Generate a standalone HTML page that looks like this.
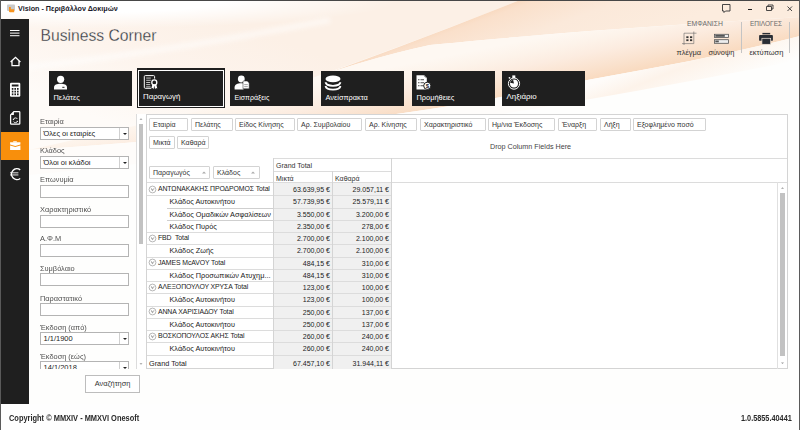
<!DOCTYPE html>
<html><head><meta charset="utf-8">
<style>
*{box-sizing:border-box;margin:0;padding:0}
html,body{width:800px;height:430px;overflow:hidden;background:#fefefe;font-family:"Liberation Sans",sans-serif;position:relative}
.a{position:absolute}
.t{position:absolute;white-space:nowrap;line-height:1}
#bg{position:absolute;left:0;top:0}
.tile{position:absolute;top:71px;width:83px;height:35px;background:#1f1f1f}
.tile .lbl{position:absolute;left:4.5px;top:22.6px;color:#fff;font-size:7.4px;white-space:nowrap;line-height:1}
.tile svg{position:absolute;left:0;top:0}
.lab{position:absolute;left:40.3px;font-size:6.4px;transform:scaleX(1.157);transform-origin:0 0;color:#505050;white-space:nowrap;line-height:1}
.box{position:absolute;left:40px;width:89px;height:13px;background:#fff;border:1px solid #b4b4b4}
.combo .v{position:absolute;left:2.5px;top:2.3px;font-size:7.5px;color:#222;white-space:nowrap;line-height:1}
.combo .dd{position:absolute;right:0;top:0;width:9px;height:11px;border-left:1px solid #d0d0d0}
.combo .dd:after{content:"";position:absolute;left:2.5px;top:4.5px;border-left:2px solid transparent;border-right:2px solid transparent;border-top:2px solid #222}
.fb{position:absolute;height:13px;border-radius:1px;background:#fff;border:1px solid #d3d3d3;font-size:7px;color:#333;line-height:11px;padding-left:3px;white-space:nowrap}
.hl{position:absolute;height:1px;background:#dcdcdc}
.vl{position:absolute;width:1px;background:#d4d4d4}
.rt{position:absolute;font-size:7.3px;color:#222;white-space:nowrap;line-height:1}
.num{text-align:right;font-size:7px}
.cell{position:absolute;height:12.25px;background:#f0f0f0}
.wc{position:absolute;top:0}
.up{letter-spacing:-0.1px;font-size:6.9px}

</style></head>
<body>
<svg id="bg" width="800" height="404" viewBox="0 0 800 404">
  <defs>
    <linearGradient id="pb" gradientUnits="userSpaceOnUse" x1="695" y1="57.75" x2="685" y2="8">
      <stop offset="0" stop-color="#f9dbc1"/>
      <stop offset="0.2" stop-color="#fae2ce"/>
      <stop offset="0.5" stop-color="#fcece0"/>
      <stop offset="0.75" stop-color="#fdf3ea"/>
      <stop offset="1" stop-color="#fef8f2"/>
    </linearGradient>
    <linearGradient id="r1" gradientUnits="userSpaceOnUse" x1="230" y1="20" x2="180" y2="150">
      <stop offset="0" stop-color="#fcf0e6"/>
      <stop offset="0.5" stop-color="#fdf4ed"/>
      <stop offset="1" stop-color="#fefbf8"/>
    </linearGradient>
    <linearGradient id="e1" gradientUnits="userSpaceOnUse" x1="400" y1="40.5" x2="427.8" y2="115.5">
      <stop offset="0" stop-color="#f8d6ba"/>
      <stop offset="0.12" stop-color="#fae0cb"/>
      <stop offset="0.5" stop-color="#fbe9da"/>
      <stop offset="1" stop-color="#fcecde"/>
    </linearGradient>
    <radialGradient id="wtl" gradientUnits="userSpaceOnUse" cx="80" cy="0" r="320" gradientTransform="scale(1 0.09)">
      <stop offset="0.45" stop-color="#fff" stop-opacity="1"/>
      <stop offset="1" stop-color="#fff" stop-opacity="0"/>
    </radialGradient>
    <linearGradient id="low" gradientUnits="userSpaceOnUse" x1="600" y1="80" x2="620" y2="130">
      <stop offset="0" stop-color="#fefcfa"/>
      <stop offset="0.35" stop-color="#fdf3ea"/>
      <stop offset="1" stop-color="#fefefd"/>
    </linearGradient>
    <filter id="bl" x="-10%" y="-50%" width="120%" height="200%"><feGaussianBlur stdDeviation="2.5"/></filter>
  </defs>
  <rect x="0" y="0" width="800" height="404" fill="#fefefd"/>
  <path d="M0 0 H520 Q 400 48 250 100 Q 150 130 29 150 L 0 152 Z" fill="url(#r1)"/>
  <path d="M520 0 H800 V17 Q 700 23 590 31 Q 480 40 430 45 Q 360 60 280 90 Q 400 48 520 0 Z" fill="url(#e1)"/>
  <path d="M800 17 Q 700 23 590 31 Q 480 40 430 45 Q 360 60 280 90 Q 250 100 29 150 L 29 150 Q 300 132 480 101 L 590 79.5 Q 640 70.5 690 61 Q 745 50 800 36 Z" fill="url(#pb)"/>
  <path d="M800 36 Q 745 50 690 61 Q 640 70.5 590 79.5 L 480 101 Q 300 132 29 150 L 29 175 Q 400 140 800 60 Z" fill="url(#low)"/>
  <path d="M0 70 Q 150 55 330 20" fill="none" stroke="#fff" stroke-width="5" opacity="0.6" filter="url(#bl)"/>
  <rect x="0" y="0" width="800" height="404" fill="url(#wtl)"/>
</svg>
<!-- window border -->
<div class="a" style="left:0;top:0;width:800px;height:1px;background:#474747"></div>
<div class="a" style="left:0;top:0;width:1px;height:430px;background:#5a5a5a"></div>
<div class="a" style="left:799px;top:0;width:1px;height:430px;background:#5a5a5a"></div>

<!-- title -->
<svg class="a" style="left:6px;top:3px" width="11" height="11" viewBox="0 0 11 11">
 <rect x="1" y="1.5" width="8" height="6.5" rx="1" fill="#c9c9c9"/>
 <path d="M3 4 h1.8 v2.3 h3.4 v2.9 h-4.2 q-1 0 -1 -1 z" fill="#f7931e"/>
</svg>
<div class="t" style="left:18px;top:5px;font-size:7.2px;font-weight:bold;color:#1a1a2a">Vision - Περιβάλλον Δοκιμών</div>

<!-- window controls -->
<svg class="a" style="left:720px;top:2px" width="80" height="14" viewBox="0 0 80 14">
 <path d="M2.5 2.5 h7.5 v6.5 h-4.5 l-1.5 1.5 v-1.5 h-1.5 z" fill="none" stroke="#333" stroke-width="0.9"/>
 <rect x="28" y="7" width="4" height="1" fill="#222"/>
 <path d="M46.5 4.5 h5 v4 h-5 z M48 4.5 v-1.5 h5 v4 h-1.5" fill="none" stroke="#333" stroke-width="0.9"/>
 <path d="M67.5 4.5 l4.5 4.5 M72 4.5 l-4.5 4.5" fill="none" stroke="#333" stroke-width="0.9"/>
</svg>

<!-- sidebar -->
<div class="a" style="left:1px;top:19px;width:28px;height:385px;background:#1f1f1f"></div>
<div class="a" style="left:1px;top:132px;width:28px;height:28px;background:#f88f0c"></div>
<svg class="a" style="left:0;top:19px" width="30" height="170" viewBox="0 19 30 170">
 <g fill="#fff">
  <rect x="10" y="30" width="9.5" height="1"/>
  <rect x="10" y="32.6" width="9.5" height="1"/>
  <rect x="10" y="35.2" width="9.5" height="1"/>
 </g>
 <path d="M10.6 62 L15.5 57.3 L20.4 62 M12 61 V65.7 H19 V61" fill="none" stroke="#fff" stroke-width="1.3"/>
 <rect x="10" y="82.7" width="10.3" height="14" rx="1.2" fill="#fff"/>
 <rect x="11.8" y="84.5" width="6.7" height="2" fill="#1f1f1f"/>
 <g fill="#1f1f1f">
  <rect x="11.8" y="88" width="1.6" height="1.8"/><rect x="14.4" y="88" width="1.6" height="1.8"/><rect x="17" y="88" width="1.6" height="1.8"/>
  <rect x="11.8" y="90.7" width="1.6" height="1.8"/><rect x="14.4" y="90.7" width="1.6" height="1.8"/><rect x="17" y="90.7" width="1.6" height="1.8"/>
  <rect x="11.8" y="93.4" width="1.6" height="1.8"/><rect x="14.4" y="93.4" width="1.6" height="1.8"/><rect x="17" y="93.4" width="1.6" height="1.8"/>
 </g>
 <path d="M13.9 111.6 H19.1 Q19.8 111.6 19.8 112.3 V123.5 Q19.8 124.2 19.1 124.2 H11.3 Q10.6 124.2 10.6 123.5 V114.9 Z" fill="none" stroke="#fff" stroke-width="1.25"/>
 <path d="M10.6 114.9 L13.9 111.6 V114.9 Z" fill="#fff"/>
 <path d="M13.3 119.6 Q13.8 117.9 15.5 117.9 Q16.9 117.9 17.4 119" fill="none" stroke="#fff" stroke-width="0.9"/>
 <path d="M17.6 121.2 Q17.1 122.6 15.4 122.6 Q14 122.6 13.5 121.6" fill="none" stroke="#fff" stroke-width="0.9"/>
 <path d="M12.6 119.2 L14 120.3 L14.2 118.7 Z M18.3 121.6 L16.9 120.5 L16.7 122.1 Z" fill="#fff"/>
 <rect x="13.2" y="141" width="3.6" height="1.5" fill="#fff" opacity="0.75"/>
 <path d="M10.1 142.3 H20.4 V144.4 L15.3 145.9 L10.1 144.4 Z" fill="#fff"/>
 <path d="M10.1 145.4 L15.3 147 L20.4 145.4 V150 H10.1 Z" fill="#fff"/>
 <path d="M20.2 169.9 A5.4 5.4 0 1 0 20.2 178.5" fill="none" stroke="#fff" stroke-width="1.4"/>
 <rect x="10" y="172.4" width="8.4" height="0.9" fill="#fff"/>
 <rect x="10" y="174.5" width="8.4" height="0.9" fill="#fff"/>
</svg>

<!-- header title -->
<div class="t" style="left:40.5px;top:28px;font-size:15.7px;color:#2c3039;-webkit-text-stroke:0.3px #fcf4ec">Business Corner</div>

<!-- ribbon -->
<div class="t" style="left:687px;top:21px;font-size:6.8px;color:#6a6a6a">ΕΜΦΑΝΙΣΗ</div>
<div class="t" style="left:750px;top:21.3px;font-size:6.5px;color:#6a6a6a">ΕΠΙΛΟΓΕΣ</div>
<div class="a" style="left:741px;top:22px;width:1px;height:31px;background:#c4c4c4"></div>
<div class="a" style="left:789px;top:22px;width:1px;height:31px;background:#c4c4c4"></div>
<svg class="a" style="left:676px;top:26px" width="124" height="24" viewBox="676 26 124 24">
 <path d="M684 33.2 H696.5 M684 33.2 V45 M693.8 31.5 V43.6 H682" fill="none" stroke="#666" stroke-width="0.6"/>
 <g fill="#333"><rect x="686.3" y="36.3" width="2.2" height="1.8"/><rect x="690" y="36.3" width="2.2" height="1.8"/><rect x="686.3" y="39.3" width="2.2" height="1.8"/><rect x="690" y="39.3" width="2.2" height="1.8"/></g>
 <rect x="714.6" y="34.3" width="14" height="3.2" fill="#eee" stroke="#555" stroke-width="0.8"/>
 <rect x="715.3" y="35" width="9.5" height="1.8" fill="#555"/>
 <rect x="714.6" y="39.7" width="14" height="3.6" fill="#eee" stroke="#555" stroke-width="0.8"/>
 <rect x="715.3" y="40.5" width="3.5" height="1.8" fill="#555"/>
 <rect x="762.4" y="32.9" width="7.8" height="1.5" fill="#2a2e35"/>
 <rect x="759.1" y="35" width="13.8" height="5.8" rx="0.9" fill="#2a2e35"/>
 <rect x="761.9" y="38.3" width="8.8" height="6" fill="#2a2e35" stroke="#f3e6da" stroke-width="0.7"/>
</svg>
<div class="t" style="left:676.5px;top:48.5px;font-size:7.5px;color:#333">πλέγμα</div>
<div class="t" style="left:708.5px;top:48.5px;font-size:7.4px;color:#333">σύνοψη</div>
<div class="t" style="left:749.5px;top:48.5px;font-size:7.5px;color:#333">εκτύπωση</div>

<!-- tiles -->
<div class="tile" style="left:49px"><svg width="83" height="35" viewBox="49 71 83 35">
 <circle cx="60.6" cy="79.3" r="3.6" fill="#fff"/>
 <path d="M54 89.6 V87.5 C54 84.8 57 83.8 60.5 83.8 C64 83.8 67 84.8 67 87.5 V89.6 Z" fill="#fff"/>
 <rect x="62.3" y="86.8" width="2.2" height="1" fill="#1f1f1f"/>
</svg><div class="lbl">Πελάτες</div></div>

<div class="a" style="left:137px;top:68px;width:88px;height:40px;border:1px solid #1f1f1f;border-top-width:2px"></div>
<div class="tile" style="left:138px;top:70px;width:86px;height:37px;border:1px solid #fff"><svg width="84" height="35" viewBox="139 71 84 35">
 <path d="M151 88.3 H145.3 Q144.3 88.3 144.3 87.3 V76.6 Q144.3 75.6 145.3 75.6 H153.6 Q154.6 75.6 154.6 76.6 V78.6" fill="none" stroke="#fff" stroke-width="1"/>
 <g fill="#d8d8d8"><rect x="146.2" y="77.6" width="4.6" height="0.9"/><rect x="146.2" y="79.8" width="4.6" height="0.9"/><rect x="146.2" y="82" width="4" height="0.9"/><rect x="146.2" y="84.2" width="4" height="0.9"/><rect x="146.2" y="86.4" width="4.3" height="0.9"/></g>
 <circle cx="154.3" cy="82.4" r="2.5" fill="#1f1f1f" stroke="#fff" stroke-width="1.3"/>
 <path d="M152.3 84.6 L151.3 88.6 L152.7 88 L153.5 89.2 L154.3 85.6 L155.1 89.2 L155.9 88 L157.3 88.6 L156.3 84.6 Z" fill="#fff"/>
</svg><div class="lbl" style="left:4px;top:21.7px;font-size:7.8px">Παραγωγή</div></div>

<div class="tile" style="left:230px"><svg width="83" height="35" viewBox="230 71 83 35">
 <circle cx="241.3" cy="79" r="3.4" fill="#fff"/>
 <path d="M234.6 89.4 V87.3 C234.6 84.5 237.5 83.3 241 83.3 C242 83.3 243 83.4 243.6 83.6 V89.4 Z" fill="#fff"/>
 <path d="M243 81 H247.3 L249.2 82.9 V88.8 H243 Z" fill="#fff" stroke="#1f1f1f" stroke-width="0.5"/>
 <g fill="#888"><rect x="244.2" y="84.3" width="3.6" height="0.8"/><rect x="244.2" y="86.3" width="3.6" height="0.8"/></g>
</svg><div class="lbl" style="font-size:7.05px;top:22.9px">Εισπράξεις</div></div>

<div class="tile" style="left:321px"><svg width="83" height="35" viewBox="321 71 83 35">
 <ellipse cx="333" cy="78.9" rx="7.5" ry="3.3" fill="#fff"/>
 <path d="M325.5 82.3 C326 84.6 329.5 85.8 333 85.8 C336.5 85.8 340 84.6 340.5 82.3" fill="none" stroke="#fff" stroke-width="1.8"/>
 <path d="M325.5 86 C326 88.3 329.5 89.6 333 89.6 C336.5 89.6 340 88.3 340.5 86" fill="none" stroke="#fff" stroke-width="1.8"/>
</svg><div class="lbl">Ανείσπρακτα</div></div>

<div class="tile" style="left:412px"><svg width="83" height="35" viewBox="412 71 83 35">
 <path d="M416.5 75.2 H424.2 L426.8 77.8 V89.5 H416.5 Z" fill="#fff"/><path d="M424.2 75.8 L426.2 77.8" stroke="#1f1f1f" stroke-width="0.6"/>
 <g fill="#777"><rect x="418" y="79" width="1.5" height="1.3"/><rect x="420.5" y="79" width="3.5" height="1.3"/><rect x="418" y="82" width="1.5" height="1.3"/><rect x="420.5" y="82" width="3.5" height="1.3"/><rect x="418" y="85" width="1.5" height="1.3"/><rect x="420.5" y="85" width="3.5" height="1.3"/></g>
 <circle cx="427.3" cy="85.8" r="3.6" fill="#fff" stroke="#1f1f1f" stroke-width="1"/>
 <text x="427.3" y="88.1" font-family="Liberation Sans" font-weight="bold" font-size="6" text-anchor="middle" fill="#1f1f1f">$</text>
</svg><div class="lbl">Προμήθειες</div></div>

<div class="tile" style="left:502px"><svg width="83" height="35" viewBox="502 71 83 35">
 <rect x="512.3" y="75.4" width="3" height="2.6" fill="#fff"/>
 <circle cx="514" cy="83.6" r="5.6" fill="none" stroke="#fff" stroke-width="1"/>
 <circle cx="514" cy="83.6" r="4" fill="#fff"/>
 <path d="M514 83.6 L510.1 82.7 A4 4 0 0 1 513.1 79.7 Z" fill="#1f1f1f"/>
 <circle cx="509.5" cy="77.8" r="0.9" fill="#fff"/>
</svg><div class="lbl" style="font-size:7.9px;top:22.2px">Ληξιάριο</div></div>

<!-- filter panel -->
<div class="lab" style="top:119.1px">Εταιρία</div>
<div class="box combo" style="top:127px"><div class="v">Όλες οι εταιρίες</div><div class="dd"></div></div>
<div class="lab" style="top:148.1px">Κλάδος</div>
<div class="box combo" style="top:156px"><div class="v">Όλοι οι κλάδοι</div><div class="dd"></div></div>
<div class="lab" style="top:177.1px">Επωνυμία</div>
<div class="box" style="top:185px"></div>
<div class="lab" style="top:207.1px">Χαρακτηριστικό</div>
<div class="box" style="top:215px"></div>
<div class="lab" style="top:236.1px">Α.Φ.Μ</div>
<div class="box" style="top:244px"></div>
<div class="lab" style="top:266.1px">Συμβόλαιο</div>
<div class="box" style="top:273px"></div>
<div class="lab" style="top:296.1px">Παραστατικό</div>
<div class="box" style="top:303px"></div>
<div class="lab" style="top:325.1px">Έκδοση (από)</div>
<div class="box combo" style="top:332px"><div class="v">1/1/1900</div><div class="dd"></div></div>
<div class="lab" style="top:354px">Έκδοση (εώς)</div>
<div class="a" style="left:0;top:361px;width:140px;height:8px;overflow:hidden">
 <div class="box combo" style="top:0"><div class="v">14/1/2018</div><div class="dd"></div></div>
</div>
<!-- left scrollbar -->
<div class="a" style="left:136px;top:114px;width:10px;height:255px;background:#fff;border-left:1px solid #dcdcdc"></div>
<div class="a" style="left:139px;top:124px;width:4px;height:120px;background:#c2c2c2"></div>
<svg class="a" style="left:136px;top:114px" width="10" height="255" viewBox="136 114 10 255"><path d="M139.5 119.8 L141 118.2 L142.5 119.8 Z" fill="#999"/><path d="M139.5 363.2 L141 364.8 L142.5 363.2 Z" fill="#999"/></svg>

<div class="a" style="left:85px;top:375px;width:55px;height:18px;background:#fff;border:1px solid #bdbdbd;font-size:7.4px;color:#333;text-align:center;line-height:16px">Αναζήτηση</div>

<!-- pivot -->
<div class="a" style="left:146px;top:114px;width:642px;height:255px;background:#fff;border:1px solid #d4d4d4"></div>
<div class="fb" style="left:149px;top:118px;width:39px">Εταιρία</div>
<div class="fb" style="left:191px;top:118px;width:42px">Πελάτης</div>
<div class="fb" style="left:235px;top:118px;width:60px">Είδος Κίνησης</div>
<div class="fb" style="left:297px;top:118px;width:65px">Αρ. Συμβολαίου</div>
<div class="fb" style="left:365px;top:118px;width:52px">Αρ. Κίνησης</div>
<div class="fb" style="left:420px;top:118px;width:66px">Χαρακτηριστικό</div>
<div class="fb" style="left:488px;top:118px;width:67px">Ημ/νια Έκδοσης</div>
<div class="fb" style="left:558px;top:118px;width:39px">Έναρξη</div>
<div class="fb" style="left:600px;top:118px;width:31px">Λήξη</div>
<div class="fb" style="left:633px;top:118px;width:73px">Εξοφλημένο ποσό</div>
<div class="fb" style="left:149px;top:136px;width:26px">Μικτά</div>
<div class="fb" style="left:177px;top:136px;width:32px">Καθαρά</div>
<div class="t" style="left:490px;top:143.3px;font-size:7.2px;color:#444">Drop Column Fields Here</div>
<div class="hl" style="left:273px;top:158px;width:514px"></div>
<div class="fb" style="left:149px;top:166px;width:61px">Παραγωγός</div>
<div class="fb" style="left:213px;top:166px;width:47px">Κλάδος</div>
<svg class="a" style="left:201px;top:170px" width="6" height="5"><path d="M1 3.5 L3 1.5 L5 3.5 Z" fill="#aaa"/></svg>
<svg class="a" style="left:250px;top:170px" width="6" height="5"><path d="M1 3.5 L3 1.5 L5 3.5 Z" fill="#aaa"/></svg>
<div class="hl" style="left:274px;top:171px;width:117px"></div>
<div class="hl" style="left:147px;top:182px;width:640px"></div>
<div class="t" style="left:276px;top:162px;font-size:7px;color:#333">Grand Total</div>
<div class="t" style="left:276px;top:174.5px;font-size:7px;color:#333">Μικτά</div>
<div class="t" style="left:335px;top:174.5px;font-size:7px;color:#333">Καθαρά</div>
<div class="cell" style="left:274px;top:183.00px;width:58px"></div>
<div class="cell" style="left:333px;top:183.00px;width:58px"></div>
<div class="cell" style="left:274px;top:195.25px;width:58px"></div>
<div class="cell" style="left:333px;top:195.25px;width:58px"></div>
<div class="cell" style="left:274px;top:207.50px;width:58px"></div>
<div class="cell" style="left:333px;top:207.50px;width:58px"></div>
<div class="cell" style="left:274px;top:219.75px;width:58px"></div>
<div class="cell" style="left:333px;top:219.75px;width:58px"></div>
<div class="cell" style="left:274px;top:232.00px;width:58px"></div>
<div class="cell" style="left:333px;top:232.00px;width:58px"></div>
<div class="cell" style="left:274px;top:244.25px;width:58px"></div>
<div class="cell" style="left:333px;top:244.25px;width:58px"></div>
<div class="cell" style="left:274px;top:256.50px;width:58px"></div>
<div class="cell" style="left:333px;top:256.50px;width:58px"></div>
<div class="cell" style="left:274px;top:268.75px;width:58px"></div>
<div class="cell" style="left:333px;top:268.75px;width:58px"></div>
<div class="cell" style="left:274px;top:281.00px;width:58px"></div>
<div class="cell" style="left:333px;top:281.00px;width:58px"></div>
<div class="cell" style="left:274px;top:293.25px;width:58px"></div>
<div class="cell" style="left:333px;top:293.25px;width:58px"></div>
<div class="cell" style="left:274px;top:305.50px;width:58px"></div>
<div class="cell" style="left:333px;top:305.50px;width:58px"></div>
<div class="cell" style="left:274px;top:317.75px;width:58px"></div>
<div class="cell" style="left:333px;top:317.75px;width:58px"></div>
<div class="cell" style="left:274px;top:330.00px;width:58px"></div>
<div class="cell" style="left:333px;top:330.00px;width:58px"></div>
<div class="cell" style="left:274px;top:342.25px;width:58px"></div>
<div class="cell" style="left:333px;top:342.25px;width:58px"></div>
<div class="cell" style="left:274px;top:354.50px;width:58px;height:14px"></div>
<div class="cell" style="left:333px;top:354.50px;width:58px;height:14px"></div>
<svg class="a" style="left:147.5px;top:184.50px" width="9" height="9" viewBox="0 0 9 9"><circle cx="4.5" cy="4.5" r="3.4" fill="none" stroke="#999" stroke-width="0.7"/><path d="M2.9 3.3 L4.5 4.9 L6.1 3.3 M3.4 4.6 L4.5 5.7 L5.6 4.6" fill="none" stroke="#777" stroke-width="0.7"/></svg>
<div class="rt up" style="left:158px;top:186.00px">ΑΝΤΩΝΑΚΑΚΗΣ ΠΡΟΔΡΟΜΟΣ Total</div>
<div class="rt num" style="left:274px;top:186.00px;width:56px">63.639,95 €</div>
<div class="rt num" style="left:333px;top:186.00px;width:56px">29.057,11 €</div>
<div class="rt" style="left:169.5px;top:198.25px">Κλάδος Αυτοκινήτου</div>
<div class="rt num" style="left:274px;top:198.25px;width:56px">57.739,95 €</div>
<div class="rt num" style="left:333px;top:198.25px;width:56px">25.579,11 €</div>
<div class="rt" style="left:169.5px;top:210.50px">Κλάδος Ομαδικών Ασφαλίσεων</div>
<div class="rt num" style="left:274px;top:210.50px;width:56px">3.550,00 €</div>
<div class="rt num" style="left:333px;top:210.50px;width:56px">3.200,00 €</div>
<div class="rt" style="left:169.5px;top:222.75px">Κλάδος Πυρός</div>
<div class="rt num" style="left:274px;top:222.75px;width:56px">2.350,00 €</div>
<div class="rt num" style="left:333px;top:222.75px;width:56px">278,00 €</div>
<svg class="a" style="left:147.5px;top:233.50px" width="9" height="9" viewBox="0 0 9 9"><circle cx="4.5" cy="4.5" r="3.4" fill="none" stroke="#999" stroke-width="0.7"/><path d="M2.9 3.3 L4.5 4.9 L6.1 3.3 M3.4 4.6 L4.5 5.7 L5.6 4.6" fill="none" stroke="#777" stroke-width="0.7"/></svg>
<div class="rt up" style="left:158px;top:235.00px">FBD&nbsp; Total</div>
<div class="rt num" style="left:274px;top:235.00px;width:56px">2.700,00 €</div>
<div class="rt num" style="left:333px;top:235.00px;width:56px">2.100,00 €</div>
<div class="rt" style="left:169.5px;top:247.25px">Κλάδος Ζωής</div>
<div class="rt num" style="left:274px;top:247.25px;width:56px">2.700,00 €</div>
<div class="rt num" style="left:333px;top:247.25px;width:56px">2.100,00 €</div>
<svg class="a" style="left:147.5px;top:258.00px" width="9" height="9" viewBox="0 0 9 9"><circle cx="4.5" cy="4.5" r="3.4" fill="none" stroke="#999" stroke-width="0.7"/><path d="M2.9 3.3 L4.5 4.9 L6.1 3.3 M3.4 4.6 L4.5 5.7 L5.6 4.6" fill="none" stroke="#777" stroke-width="0.7"/></svg>
<div class="rt up" style="left:158px;top:259.50px">JAMES McAVOY Total</div>
<div class="rt num" style="left:274px;top:259.50px;width:56px">484,15 €</div>
<div class="rt num" style="left:333px;top:259.50px;width:56px">310,00 €</div>
<div class="rt" style="left:169.5px;top:271.75px">Κλάδος Προσωπικών Ατυχημ...</div>
<div class="rt num" style="left:274px;top:271.75px;width:56px">484,15 €</div>
<div class="rt num" style="left:333px;top:271.75px;width:56px">310,00 €</div>
<svg class="a" style="left:147.5px;top:282.50px" width="9" height="9" viewBox="0 0 9 9"><circle cx="4.5" cy="4.5" r="3.4" fill="none" stroke="#999" stroke-width="0.7"/><path d="M2.9 3.3 L4.5 4.9 L6.1 3.3 M3.4 4.6 L4.5 5.7 L5.6 4.6" fill="none" stroke="#777" stroke-width="0.7"/></svg>
<div class="rt up" style="left:158px;top:284.00px">ΑΛΕΞΟΠΟΥΛΟΥ ΧΡΥΣΑ Total</div>
<div class="rt num" style="left:274px;top:284.00px;width:56px">123,00 €</div>
<div class="rt num" style="left:333px;top:284.00px;width:56px">100,00 €</div>
<div class="rt" style="left:169.5px;top:296.25px">Κλάδος Αυτοκινήτου</div>
<div class="rt num" style="left:274px;top:296.25px;width:56px">123,00 €</div>
<div class="rt num" style="left:333px;top:296.25px;width:56px">100,00 €</div>
<svg class="a" style="left:147.5px;top:307.00px" width="9" height="9" viewBox="0 0 9 9"><circle cx="4.5" cy="4.5" r="3.4" fill="none" stroke="#999" stroke-width="0.7"/><path d="M2.9 3.3 L4.5 4.9 L6.1 3.3 M3.4 4.6 L4.5 5.7 L5.6 4.6" fill="none" stroke="#777" stroke-width="0.7"/></svg>
<div class="rt up" style="left:158px;top:308.50px">ΑΝΝΑ ΧΑΡΙΣΙΑΔΟΥ Total</div>
<div class="rt num" style="left:274px;top:308.50px;width:56px">250,00 €</div>
<div class="rt num" style="left:333px;top:308.50px;width:56px">137,00 €</div>
<div class="rt" style="left:169.5px;top:320.75px">Κλάδος Αυτοκινήτου</div>
<div class="rt num" style="left:274px;top:320.75px;width:56px">250,00 €</div>
<div class="rt num" style="left:333px;top:320.75px;width:56px">137,00 €</div>
<svg class="a" style="left:147.5px;top:331.50px" width="9" height="9" viewBox="0 0 9 9"><circle cx="4.5" cy="4.5" r="3.4" fill="none" stroke="#999" stroke-width="0.7"/><path d="M2.9 3.3 L4.5 4.9 L6.1 3.3 M3.4 4.6 L4.5 5.7 L5.6 4.6" fill="none" stroke="#777" stroke-width="0.7"/></svg>
<div class="rt up" style="left:158px;top:333.00px">ΒΟΣΚΟΠΟΥΛΟΣ ΑΚΗΣ Total</div>
<div class="rt num" style="left:274px;top:333.00px;width:56px">260,00 €</div>
<div class="rt num" style="left:333px;top:333.00px;width:56px">240,00 €</div>
<div class="rt" style="left:169.5px;top:345.25px">Κλάδος Αυτοκινήτου</div>
<div class="rt num" style="left:274px;top:345.25px;width:56px">260,00 €</div>
<div class="rt num" style="left:333px;top:345.25px;width:56px">240,00 €</div>
<div class="rt" style="left:149px;top:359.80px">Grand Total</div>
<div class="rt num" style="left:274px;top:359.80px;width:56px">67.457,10 €</div>
<div class="rt num" style="left:333px;top:359.80px;width:56px">31.944,11 €</div>
<div class="hl" style="left:147px;top:195.25px;width:126px"></div>
<div class="hl" style="left:274px;top:195.25px;width:117px"></div>
<div class="hl" style="left:167px;top:207.50px;width:106px;background:#cfcfcf"></div>
<div class="hl" style="left:274px;top:207.50px;width:117px"></div>
<div class="hl" style="left:167px;top:219.75px;width:106px;background:#cfcfcf"></div>
<div class="hl" style="left:274px;top:219.75px;width:117px"></div>
<div class="hl" style="left:147px;top:232.00px;width:126px"></div>
<div class="hl" style="left:274px;top:232.00px;width:117px"></div>
<div class="hl" style="left:147px;top:244.25px;width:126px"></div>
<div class="hl" style="left:274px;top:244.25px;width:117px"></div>
<div class="hl" style="left:147px;top:256.50px;width:126px"></div>
<div class="hl" style="left:274px;top:256.50px;width:117px"></div>
<div class="hl" style="left:147px;top:268.75px;width:126px"></div>
<div class="hl" style="left:274px;top:268.75px;width:117px"></div>
<div class="hl" style="left:147px;top:281.00px;width:126px"></div>
<div class="hl" style="left:274px;top:281.00px;width:117px"></div>
<div class="hl" style="left:147px;top:293.25px;width:126px"></div>
<div class="hl" style="left:274px;top:293.25px;width:117px"></div>
<div class="hl" style="left:147px;top:305.50px;width:126px"></div>
<div class="hl" style="left:274px;top:305.50px;width:117px"></div>
<div class="hl" style="left:147px;top:317.75px;width:126px"></div>
<div class="hl" style="left:274px;top:317.75px;width:117px"></div>
<div class="hl" style="left:147px;top:330.00px;width:126px"></div>
<div class="hl" style="left:274px;top:330.00px;width:117px"></div>
<div class="hl" style="left:147px;top:342.25px;width:126px"></div>
<div class="hl" style="left:274px;top:342.25px;width:117px"></div>
<div class="hl" style="left:147px;top:354.50px;width:126px"></div>
<div class="hl" style="left:274px;top:354.50px;width:117px"></div>
<div class="vl" style="left:273px;top:158px;height:211px"></div>
<div class="vl" style="left:332px;top:171px;height:198px"></div>
<div class="vl" style="left:391px;top:158px;height:211px"></div>
<!-- right scrollbar -->
<div class="vl" style="left:777px;top:182px;height:187px;background:#e0e0e0"></div>
<div class="a" style="left:780px;top:192.5px;width:5px;height:163px;background:#c2c2c2"></div>
<svg class="a" style="left:777px;top:182px" width="10" height="187" viewBox="777 182 10 187"><path d="M781 188.8 L782.5 187.2 L784 188.8 Z" fill="#999"/><path d="M781 362.4 L782.5 364 L784 362.4 Z" fill="#999"/></svg>

<!-- footer -->
<div class="t" style="left:9.3px;top:413.6px;font-size:8.6px;font-weight:bold;color:#2a2a2a;transform:scaleX(0.865);transform-origin:0 0">Copyright © MMXIV - MMXVI Onesoft</div>
<div class="t" style="left:740.6px;top:413.6px;font-size:8.6px;font-weight:bold;color:#2a2a2a;transform:scaleX(0.85);transform-origin:0 0">1.0.5855.40441</div>

</body></html>
